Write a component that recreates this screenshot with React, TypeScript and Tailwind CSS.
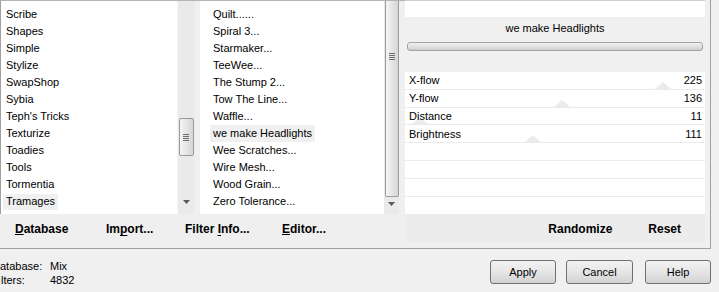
import React from "react";

const leftItems = [
  "Scribe",
  "Shapes",
  "Simple",
  "Stylize",
  "SwapShop",
  "Sybia",
  "Teph's Tricks",
  "Texturize",
  "Toadies",
  "Tools",
  "Tormentia",
  "Tramages",
  "Transparency",
];

const midItems = [
  "Quilt......",
  "Spiral 3...",
  "Starmaker...",
  "TeeWee...",
  "The Stump 2...",
  "Tow The Line...",
  "Waffle...",
  "we make Headlights",
  "Wee Scratches...",
  "Wire Mesh...",
  "Wood Grain...",
  "Zero Tolerance...",
];

const params = [
  { name: "X-flow", value: 225 },
  { name: "Y-flow", value: 136 },
  { name: "Distance", value: 11 },
  { name: "Brightness", value: 111 },
];

function Grip() {
  return (
    <div className="flex flex-col gap-[1px] items-center">
      <div className="w-[6px] h-[1px] bg-[#6e6e6e]" />
      <div className="w-[6px] h-[1px] bg-[#6e6e6e]" />
      <div className="w-[6px] h-[1px] bg-[#6e6e6e]" />
      <div className="w-[6px] h-[1px] bg-[#6e6e6e]" />
    </div>
  );
}

function DownArrow() {
  return (
    <svg width="7" height="4" viewBox="0 0 7 4">
      <polygon points="0,0 7,0 3.5,4" fill="#5a5a5a" />
    </svg>
  );
}

function Tri() {
  return (
    <svg width="16" height="7" viewBox="0 0 16 7">
      <polygon points="0,7 16,7 8,0" fill="#ececec" />
    </svg>
  );
}

export default function App() {
  return (
    <div
      className="w-[719px] h-[292px] bg-[#f0f0f0] overflow-hidden text-black text-[11px] leading-none"
      style={{ fontFamily: '"Liberation Sans", Arial, sans-serif' }}
    >
      {/* top area */}
      <div className="w-[711px] h-[249px] flex border-r border-b border-[#a0a0a0]">
        {/* lists column */}
        <div className="w-[405px] flex flex-col">
          <div className="h-[214px] flex border-t border-[#b4b4b4]">
            {/* left list */}
            <div className="w-[194px] h-full flex bg-white border-l border-[#a0a0a0]">
              <div className="flex-1 pt-[5px] pl-[2px] overflow-hidden">
                {leftItems.map((t) => (
                  <div key={t} className="h-[17px] flex items-center">
                    <span
                      className={
                        "px-[3px] h-[16px] flex items-center " +
                        (t === "Tramages" ? "bg-[#f0f0f0]" : "")
                      }
                    >
                      {t}
                    </span>
                  </div>
                ))}
              </div>
              <div className="w-[17px] h-full bg-[#eaeaea] border-l border-[#f5f5f5] flex flex-col items-center">
                <div className="h-[117px]" />
                <div className="w-[15px] h-[38px] rounded-[2px] border border-[#9a9a9a] bg-gradient-to-r from-[#f5f5f5] to-[#d6d6d6] flex items-center justify-center">
                  <Grip />
                </div>
                <div className="flex-1" />
                <div className="h-[14px] flex items-start justify-center">
                  <DownArrow />
                </div>
              </div>
            </div>
            <div className="w-[6px]" />
            {/* middle list */}
            <div className="w-[199px] h-full flex bg-white">
              <div className="flex-1 pt-[5px] pl-[10px] overflow-hidden">
                {midItems.map((t) => (
                  <div key={t} className="h-[17px] flex items-center">
                    <span
                      className={
                        "px-[3px] h-[17px] flex items-center " +
                        (t === "we make Headlights" ? "bg-[#f0f0f0]" : "")
                      }
                    >
                      {t}
                    </span>
                  </div>
                ))}
              </div>
              <div className="w-[15px] h-full bg-[#eaeaea] flex flex-col items-center">
                <div className="w-[14px] h-[196px] rounded-b-[2px] border border-t-0 border-[#9a9a9a] bg-gradient-to-r from-[#f5f5f5] to-[#d6d6d6] flex flex-col items-center">
                  <div className="h-[52px]" />
                  <Grip />
                </div>
                <div className="flex-1" />
                <div className="h-[12px] flex items-start justify-center">
                  <DownArrow />
                </div>
              </div>
            </div>
          </div>
          {/* button bar */}
          <div className="h-[34px] bg-[#efefef] flex items-start pt-[9px] pl-[15px] font-bold text-[12px]">
            <div className="w-[91px] first-letter:underline">Database</div>
            <div className="w-[79px]">
              Im<u className="underline-offset-2">p</u>ort...
            </div>
            <div className="w-[97px]">
              Filter <u className="underline-offset-2">I</u>nfo...
            </div>
            <div className="first-letter:underline">Editor...</div>
          </div>
        </div>

        {/* right panel */}
        <div className="w-[300px] flex flex-col">
          <div className="h-[215px] bg-white flex flex-col border-t border-[#d0d0d0]">
            <div className="h-[16px]" />
            <div className="h-[55px] bg-[#f0f0f0] flex flex-col">
              <div className="h-[24px] flex items-center justify-center">
                we make Headlights
              </div>
              <div className="mx-[2px] mt-[1px] h-[9px] rounded-[3px] border border-[#a4a4a4] bg-gradient-to-b from-[#f2f2f2] via-[#e2e2e2] to-[#cdcdcd]" />
            </div>
            {params.map((p) => (
              <div
                key={p.name}
                className="relative h-[18px] border-b border-[#eaeaea] flex items-center justify-between pl-[4px] pr-[3px] pt-[1px]"
              >
                <div
                  className="absolute bottom-0 leading-none"
                  style={{ left: `${2 + (p.value / 255) * 290 - 8}px` }}
                >
                  <Tri />
                </div>
                <span className="relative">{p.name}</span>
                <span className="relative">{p.value}</span>
              </div>
            ))}
            {[0, 1, 2, 3].map((i) => (
              <div key={i} className="h-[18px] border-b border-[#eaeaea]" />
            ))}
          </div>
          <div className="h-[27px] bg-[#ececec] flex items-center justify-end pr-[24px] gap-[36px] font-bold text-[12px]">
            <span>Randomize</span>
            <span>Reset</span>
          </div>
        </div>
      </div>

      {/* bottom area */}
      <div className="h-[43px] flex">
        <div className="pt-[10px] flex flex-col">
          <div className="h-[14px] flex items-center">
            <span className="w-[50px]">atabase:</span>
            <span>Mix</span>
          </div>
          <div className="h-[14px] flex items-center">
            <span className="w-[50px] pl-[1px]">lters:</span>
            <span>4832</span>
          </div>
        </div>
        <div className="flex-1" />
        <div className="pt-[11px] pr-[8px] flex items-start">
          <button className="w-[66px] h-[24px] rounded-[3px] border border-[#707070] bg-gradient-to-b from-[#f2f2f2] via-[#e6e6e6] to-[#d2d2d2] flex items-center justify-center">
            Apply
          </button>
          <button className="ml-[10px] w-[67px] h-[24px] rounded-[3px] border border-[#707070] bg-gradient-to-b from-[#f2f2f2] via-[#e6e6e6] to-[#d2d2d2] flex items-center justify-center">
            Cancel
          </button>
          <button className="ml-[12px] w-[66px] h-[24px] rounded-[3px] border border-[#707070] bg-gradient-to-b from-[#f2f2f2] via-[#e6e6e6] to-[#d2d2d2] flex items-center justify-center">
            Help
          </button>
        </div>
      </div>
    </div>
  );
}
